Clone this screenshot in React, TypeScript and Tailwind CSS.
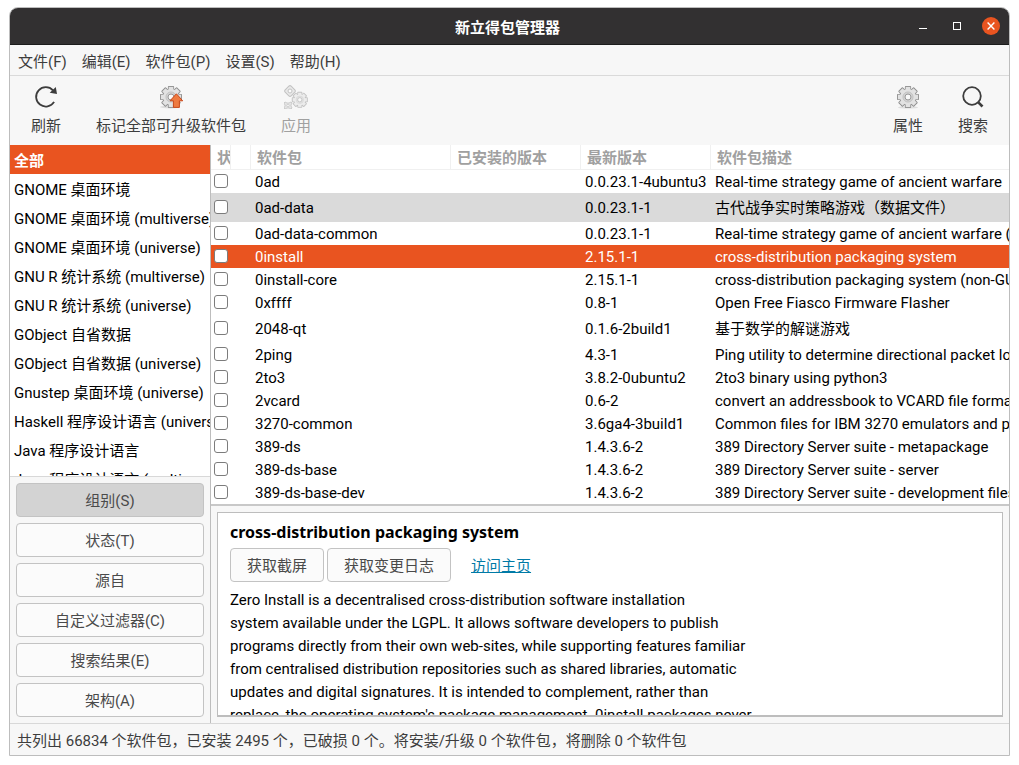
import { ReactNode } from "react";

const menus = ["文件(F)", "编辑(E)", "软件包(P)", "设置(S)", "帮助(H)"];

const sections = [
  "全部",
  "GNOME 桌面环境",
  "GNOME 桌面环境 (multiverse)",
  "GNOME 桌面环境 (universe)",
  "GNU R 统计系统 (multiverse)",
  "GNU R 统计系统 (universe)",
  "GObject 自省数据",
  "GObject 自省数据 (universe)",
  "Gnustep 桌面环境 (universe)",
  "Haskell 程序设计语言 (universe)",
  "Java 程序设计语言",
  "Java 程序设计语言 (multiverse)",
];

const filters = ["组别(S)", "状态(T)", "源自", "自定义过滤器(C)", "搜索结果(E)", "架构(A)"];

type Pkg = { name: string; version: string; summary: string; tall?: boolean };

const packages: Pkg[] = [
  { name: "0ad", version: "0.0.23.1-4ubuntu3", summary: "Real-time strategy game of ancient warfare" },
  { name: "0ad-data", version: "0.0.23.1-1", summary: "古代战争实时策略游戏（数据文件）", tall: true },
  { name: "0ad-data-common", version: "0.0.23.1-1", summary: "Real-time strategy game of ancient warfare (common data files)" },
  { name: "0install", version: "2.15.1-1", summary: "cross-distribution packaging system" },
  { name: "0install-core", version: "2.15.1-1", summary: "cross-distribution packaging system (non-GUI parts)" },
  { name: "0xffff", version: "0.8-1", summary: "Open Free Fiasco Firmware Flasher" },
  { name: "2048-qt", version: "0.1.6-2build1", summary: "基于数学的解谜游戏", tall: true },
  { name: "2ping", version: "4.3-1", summary: "Ping utility to determine directional packet loss" },
  { name: "2to3", version: "3.8.2-0ubuntu2", summary: "2to3 binary using python3" },
  { name: "2vcard", version: "0.6-2", summary: "convert an addressbook to VCARD file format" },
  { name: "3270-common", version: "3.6ga4-3build1", summary: "Common files for IBM 3270 emulators and pr3287" },
  { name: "389-ds", version: "1.4.3.6-2", summary: "389 Directory Server suite - metapackage" },
  { name: "389-ds-base", version: "1.4.3.6-2", summary: "389 Directory Server suite - server" },
  { name: "389-ds-base-dev", version: "1.4.3.6-2", summary: "389 Directory Server suite - development files" },
];

const description = [
  "Zero Install is a decentralised cross-distribution software installation",
  "system available under the LGPL. It allows software developers to publish",
  "programs directly from their own web-sites, while supporting features familiar",
  "from centralised distribution repositories such as shared libraries, automatic",
  "updates and digital signatures. It is intended to complement, rather than",
  "replace, the operating system's package management. 0install packages never",
];

const toothAngles = [0, 45, 90, 135, 180, 225, 270, 315];

function Gear({ cx, cy, r }: { cx: number; cy: number; r: number }) {
  const w = r * 0.42;
  return (
    <g transform={`translate(${cx} ${cy})`}>
      <g fill="#8f8f8f">
        {toothAngles.map((a) => (
          <rect key={a} x={-w / 2 - 0.8} y={-r} width={w + 1.6} height={r} rx="0.8" transform={`rotate(${a})`} />
        ))}
        <circle r={r * 0.8} />
      </g>
      <g fill="#e2e2e2">
        {toothAngles.map((a) => (
          <rect key={a} x={-w / 2} y={-r + 0.9} width={w} height={r - 1} transform={`rotate(${a})`} />
        ))}
        <circle r={r * 0.8 - 0.9} />
      </g>
      <circle r={r * 0.46} fill="#d2d2d2" stroke="#bdbdbd" strokeWidth="0.8" />
      <circle r={r * 0.27} fill="#fafafa" stroke="#999" strokeWidth="1" />
    </g>
  );
}

function RefreshIcon() {
  return (
    <svg width="24" height="24" viewBox="0 0 24 24" fill="none">
      <path d="M20.1 16.9A9.7 9.7 0 1 1 19 5.3" stroke="#3d3d3d" strokeWidth="1.8" />
      <path d="M21.8 2l1.2 7-7.3-1.2z" fill="#3d3d3d" />
    </svg>
  );
}

function UpgradeIcon() {
  return (
    <svg width="24" height="24" viewBox="0 0 24 24">
      <ellipse cx="11" cy="22" rx="10" ry="1.4" fill="#ddd" />
      <Gear cx={12} cy={12} r={11} />
      <path d="M17.4 8.8l6.3 7h-3.3v6.6h-6v-6.6H11z" fill="#ee7a40" stroke="#c8481a" strokeWidth="1" strokeLinejoin="round" />
    </svg>
  );
}

function ApplyIcon() {
  return (
    <svg width="24" height="24" viewBox="0 0 24 24" opacity="0.5">
      <g transform="rotate(45 6 6)">
        <rect x="1.8" y="1.8" width="8.4" height="8.4" rx="1.6" fill="#dcdcdc" stroke="#8f8f8f" />
      </g>
      <circle cx="6" cy="6" r="2" fill="#fff" stroke="#8f8f8f" />
      <path d="M1 17l2 1h2l2-1 1 1-1 2v1l1 2-1 1-2-1H3l-2 1-1-1 1-2v-1l-1-2z" fill="#d4d4d4" stroke="#8f8f8f" strokeWidth="0.8" />
      <circle cx="4" cy="20.5" r="1.2" fill="#fff" stroke="#8f8f8f" strokeWidth="0.7" />
      <Gear cx={15.8} cy={14.8} r={8} />
    </svg>
  );
}

function PropertiesIcon() {
  return (
    <svg width="24" height="24" viewBox="0 0 24 24">
      <ellipse cx="12" cy="22.4" rx="10" ry="1.2" fill="#dedede" />
      <Gear cx={12} cy={12} r={11} />
    </svg>
  );
}

function SearchIcon() {
  return (
    <svg width="24" height="24" viewBox="0 0 24 24" fill="none" stroke="#3d3d3d">
      <circle cx="11" cy="11" r="8.8" strokeWidth="1.8" />
      <path d="M17.3 17.3l4.2 4.2" strokeWidth="2.6" />
    </svg>
  );
}

function ToolButton({ icon, label, disabled }: { icon: ReactNode; label: string; disabled?: boolean }) {
  return (
    <button disabled={disabled} className="flex flex-col items-center gap-[7px] whitespace-nowrap disabled:text-[#a0a0a0]">
      {icon}
      <span className="leading-5">{label}</span>
    </button>
  );
}

const buttonLook = "h-[34px] rounded border border-[#c3c3c3] pt-0.5 text-[#4a4a4a]";
const headCell = "border-r border-b border-[#f0f0f0] p-0 pt-0.5 pl-1.5";

export default function App() {
  return (
    <div className="flex h-screen bg-white px-[9px] pt-[7px] pb-[9px] font-['Roboto','Noto_Sans_CJK_SC',sans-serif] text-[15px] text-[#3d3d3d]">
      <div className="flex min-w-0 flex-1 flex-col overflow-hidden rounded-t-[9px] border border-[#bdbdbd] bg-[#f7f7f7]">
        <header className="grid h-[37px] shrink-0 grid-cols-[1fr_auto_1fr] items-center border-b border-[#1c1c1c] bg-[#323031] pr-[9px] pl-[5px]">
          <h1 className="col-start-2 pt-[3px] text-[15px] leading-6 font-bold text-white">新立得包管理器</h1>
          <div className="flex items-center justify-end gap-4 text-white">
            <button aria-label="最小化" className="flex size-[18px] items-center justify-center">
              <svg width="8" height="8" viewBox="0 0 8 8"><rect y="6" width="8" height="1" fill="currentColor" /></svg>
            </button>
            <button aria-label="最大化" className="flex size-[18px] items-center justify-center">
              <svg width="8" height="8" viewBox="0 0 8 8"><rect x=".5" y=".5" width="7" height="7" fill="none" stroke="currentColor" /></svg>
            </button>
            <button aria-label="关闭" className="flex size-[18px] items-center justify-center rounded-full bg-[#e95420]">
              <svg width="8" height="8" viewBox="0 0 8 8"><path d="M.6.6l6.8 6.8M7.4.6L.6 7.4" stroke="currentColor" strokeWidth="1.4" /></svg>
            </button>
          </div>
        </header>

        <nav className="flex h-[31px] shrink-0 items-center gap-[15px] border-b border-[#dadada] px-2 pt-[5px]">
          {menus.map((m) => (
            <button key={m} className="whitespace-nowrap">{m}</button>
          ))}
        </nav>

        <div className="flex h-[69px] shrink-0 items-start justify-between px-[21px] pt-[9px]">
          <div className="flex gap-[35px]">
            <ToolButton icon={<RefreshIcon />} label="刷新" />
            <ToolButton icon={<UpgradeIcon />} label="标记全部可升级软件包" />
            <ToolButton icon={<ApplyIcon />} label="应用" disabled />
          </div>
          <div className="flex gap-[35px]">
            <ToolButton icon={<PropertiesIcon />} label="属性" />
            <ToolButton icon={<SearchIcon />} label="搜索" />
          </div>
        </div>

        <div className="flex min-h-0 flex-1">
          <aside className="flex w-[201px] shrink-0 flex-col border-r border-[#bdbdbd]">
            <ul className="min-h-0 flex-1 overflow-hidden border-b border-[#d8d8d8] bg-white text-black">
              {sections.map((s, i) => (
                <li
                  key={s}
                  className={
                    i === 0
                      ? "h-[29px] bg-[#e95420] pt-1 pl-1 leading-[25px] font-bold whitespace-nowrap text-white"
                      : "h-[29px] pt-1 pl-1 leading-[25px] whitespace-nowrap"
                  }
                >
                  {s}
                </li>
              ))}
            </ul>
            <div className="flex shrink-0 flex-col gap-1.5 p-1.5">
              {filters.map((f, i) => (
                <button key={f} aria-pressed={i === 0} className={`${buttonLook} ${i === 0 ? "bg-[#d3d3d3]" : "bg-[#fbfbfb]"}`}>
                  {f}
                </button>
              ))}
            </div>
          </aside>

          <main className="flex min-w-0 flex-1 flex-col">
            <div className="shrink-0 overflow-hidden border-b-2 border-[#c8c8c8] bg-white">
              <table className="w-full table-fixed border-separate border-spacing-0 text-black">
                <colgroup>
                  <col className="w-5" />
                  <col className="w-5" />
                  <col className="w-[200px]" />
                  <col className="w-[130px]" />
                  <col className="w-[130px]" />
                  <col />
                </colgroup>
                <thead>
                  <tr className="h-[25px] text-left leading-[22px] whitespace-nowrap text-[#a0a0a0]">
                    <th className={`${headCell} overflow-hidden`}>状</th>
                    <th className={headCell} />
                    <th className={headCell}>软件包</th>
                    <th className={headCell}>已安装的版本</th>
                    <th className={headCell}>最新版本</th>
                    <th className="border-b border-[#f0f0f0] p-0 pt-0.5 pl-1.5">软件包描述</th>
                  </tr>
                </thead>
                <tbody>
                  {packages.map((p) => (
                    <tr
                      key={p.name}
                      className={`${p.tall ? "h-[29px]" : "h-[23px]"} leading-[22px] whitespace-nowrap ${
                        p.name === "0install" ? "bg-[#e95420] text-white" : p.name === "0ad-data" ? "bg-[#dadada]" : ""
                      }`}
                    >
                      <td className="p-0 pb-0.5 pl-[3px]">
                        <input
                          type="checkbox"
                          aria-label={p.name}
                          className="block size-3.5 appearance-none rounded-[3px] border border-[#7c7c7c] bg-white"
                        />
                      </td>
                      <td className="p-0" />
                      <td className="overflow-hidden p-0 pl-1">{p.name}</td>
                      <td className="p-0" />
                      <td className="p-0 pl-1">{p.version}</td>
                      <td className="overflow-hidden p-0 pl-1">{p.summary}</td>
                    </tr>
                  ))}
                </tbody>
              </table>
            </div>

            <div className="flex min-h-0 flex-1 flex-col p-1.5">
              <section className="min-h-0 flex-1 overflow-hidden border border-b-2 border-[#bdbdbd] bg-white px-3 pt-[7px] text-black">
                <h2 className="font-['Noto_Sans',sans-serif] text-base leading-6 font-bold">cross-distribution packaging system</h2>
                <div className="mt-1 flex items-center gap-[3px]">
                  <button className={`${buttonLook} bg-[#fbfbfb] px-4`}>获取截屏</button>
                  <button className={`${buttonLook} bg-[#fbfbfb] px-4`}>获取变更日志</button>
                  <a href="#homepage" className="ml-[17px] pt-0.5 text-[#007aa6] underline">访问主页</a>
                </div>
                <p className="mt-[7px] leading-[23px] whitespace-pre">{description.join("\n")}</p>
              </section>
            </div>
          </main>
        </div>

        <footer className="flex h-8 shrink-0 items-center border-t border-[#d8d8d8] px-[7px] pt-1 whitespace-nowrap">
          共列出 66834 个软件包，已安装 2495 个，已破损 0 个。将安装/升级 0 个软件包，将删除 0 个软件包
        </footer>
      </div>
    </div>
  );
}
